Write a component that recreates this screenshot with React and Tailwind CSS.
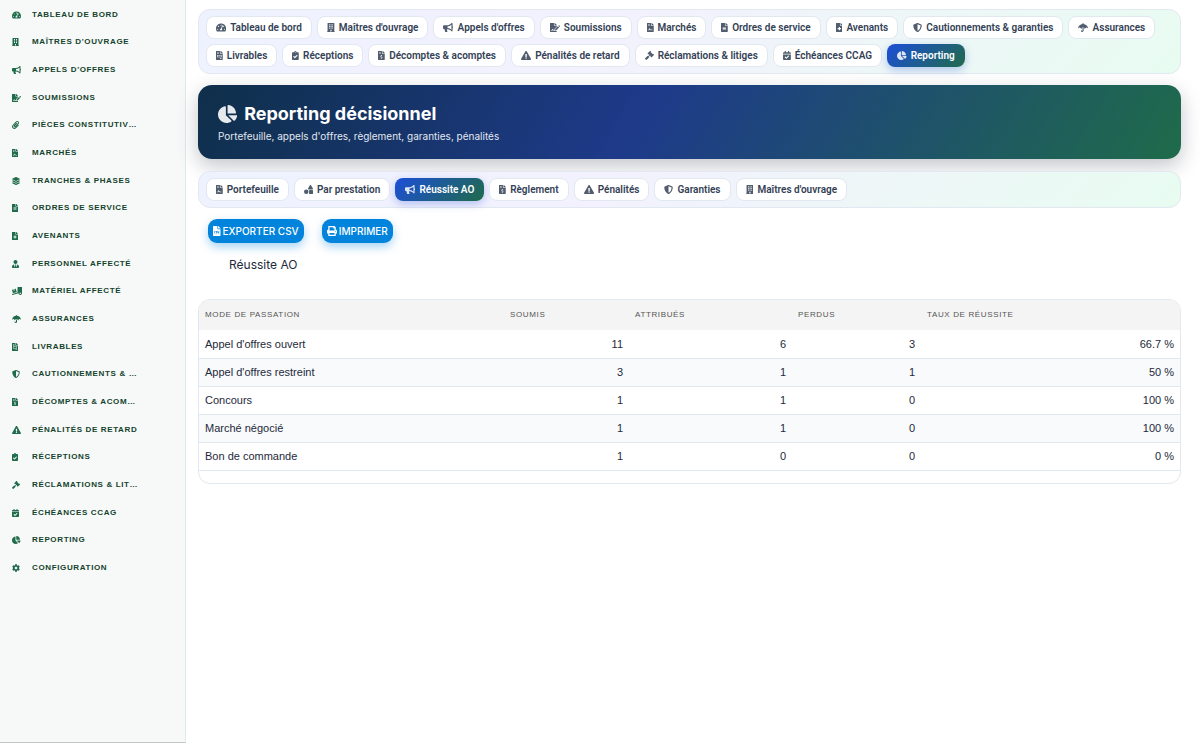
import {
  FaTachometerAlt, FaBuilding, FaBullhorn, FaFileSignature, FaPaperclip, FaFileContract, FaLayerGroup,
  FaFileAlt, FaFileMedical, FaUserTie, FaTruckLoading, FaUmbrella, FaFileInvoice, FaShieldAlt,
  FaFileInvoiceDollar, FaExclamationTriangle, FaClipboardCheck, FaGavel, FaCalendarCheck, FaChartPie,
  FaCog, FaShapes, FaFileCsv, FaPrint,
} from "react-icons/fa";

const sideItems = [
  ["Tableau de bord", FaTachometerAlt],
  ["Maîtres d'ouvrage", FaBuilding],
  ["Appels d'offres", FaBullhorn],
  ["Soumissions", FaFileSignature],
  ["Pièces constitutives", FaPaperclip],
  ["Marchés", FaFileContract],
  ["Tranches & phases", FaLayerGroup],
  ["Ordres de service", FaFileAlt],
  ["Avenants", FaFileMedical],
  ["Personnel affecté", FaUserTie],
  ["Matériel affecté", FaTruckLoading],
  ["Assurances", FaUmbrella],
  ["Livrables", FaFileInvoice],
  ["Cautionnements & garanties", FaShieldAlt],
  ["Décomptes & acomptes", FaFileInvoiceDollar],
  ["Pénalités de retard", FaExclamationTriangle],
  ["Réceptions", FaClipboardCheck],
  ["Réclamations & litiges", FaGavel],
  ["Échéances CCAG", FaCalendarCheck],
  ["Reporting", FaChartPie],
  ["Configuration", FaCog],
];

const moduleTabs = [
  ["Tableau de bord", FaTachometerAlt],
  ["Maîtres d'ouvrage", FaBuilding],
  ["Appels d'offres", FaBullhorn],
  ["Soumissions", FaFileSignature],
  ["Marchés", FaFileContract],
  ["Ordres de service", FaFileAlt],
  ["Avenants", FaFileMedical],
  ["Cautionnements & garanties", FaShieldAlt],
  ["Assurances", FaUmbrella],
  ["Livrables", FaFileInvoice],
  ["Réceptions", FaClipboardCheck],
  ["Décomptes & acomptes", FaFileInvoiceDollar],
  ["Pénalités de retard", FaExclamationTriangle],
  ["Réclamations & litiges", FaGavel],
  ["Échéances CCAG", FaCalendarCheck],
  ["Reporting", FaChartPie],
];

const reportTabs = [
  ["Portefeuille", FaFileContract],
  ["Par prestation", FaShapes],
  ["Réussite AO", FaBullhorn],
  ["Règlement", FaFileInvoiceDollar],
  ["Pénalités", FaExclamationTriangle],
  ["Garanties", FaShieldAlt],
  ["Maîtres d'ouvrage", FaBuilding],
];

const columns = ["Mode de passation", "Soumis", "Attribués", "Perdus", "Taux de réussite"];

const rows = [
  ["Appel d'offres ouvert", "11", "6", "3", "66.7 %"],
  ["Appel d'offres restreint", "3", "1", "1", "50 %"],
  ["Concours", "1", "1", "0", "100 %"],
  ["Marché négocié", "1", "1", "0", "100 %"],
  ["Bon de commande", "1", "0", "0", "0 %"],
];

function TabBar({ label, tabs, active }) {
  return (
    <nav
      aria-label={label}
      className="relative flex flex-wrap gap-[5px] rounded-xl border border-[#e2e8f0] bg-linear-[135deg] from-[#eef2ff] via-[#f3f1fe] via-40% to-[#e8fcf1] px-[7px] py-[6px] font-['Roboto',sans-serif]"
    >
      {tabs.map(([text, Icon]) => (
        <a
          key={text}
          href="#"
          aria-current={text === active ? "page" : undefined}
          className={
            text === active
              ? "flex h-[23px] items-center gap-1 rounded-lg border border-transparent bg-linear-[135deg] from-[#1d4ed8] to-[#1f6b4a] bg-origin-border px-[9px] text-[10px] font-semibold whitespace-nowrap text-white shadow-[0_3px_8px_rgba(29,78,216,0.3)]"
              : "flex h-[23px] items-center gap-1 rounded-lg border border-[#e2e8f0] bg-white px-[9px] text-[10px] font-semibold whitespace-nowrap text-[#334155]"
          }
        >
          <Icon size="auto" className="h-[9px] w-auto shrink-0 opacity-85" />
          {text}
        </a>
      ))}
    </nav>
  );
}

function ActionButton({ icon: Icon, children }) {
  return (
    <button
      type="button"
      className="flex h-6 items-center gap-[2px] rounded-[9px] bg-[#0284dc] px-[5px] text-[10px] font-medium text-white uppercase shadow-[0_4px_10px_rgba(2,132,220,0.35)]"
    >
      <Icon size="auto" className="h-[10px] w-auto" />
      {children}
    </button>
  );
}

export default function App() {
  return (
    <div className="flex min-h-screen bg-white font-['Inter',sans-serif] text-[#1e293b]">
      <aside className="w-[186px] shrink-0 border-r border-b border-r-[#e2e8f0] border-b-[#c4c6c5] bg-[#f7f9f8]">
        <nav aria-label="Menu principal" className="grid h-[582px] auto-rows-fr grid-cols-1 pt-px">
          {sideItems.map(([text, Icon]) => (
            <a
              key={text}
              href="#"
              className="flex min-w-0 items-center gap-[5px] pr-[46px] pl-3 font-['Liberation_Sans',Arial,sans-serif] text-[8px] font-bold tracking-[0.08em] text-[#14432d] uppercase"
            >
              <span className="flex w-[15px] shrink-0">
                <Icon size="auto" className="h-2 w-auto text-[#1f6b4a]" />
              </span>
              <span className="truncate">{text}</span>
            </a>
          ))}
        </nav>
      </aside>

      <main className="min-w-0 flex-1 pt-[9px] pr-[19px] pl-3">
        <TabBar label="Modules" tabs={moduleTabs} active="Reporting" />

        <header className="mt-[11px] mb-3 rounded-[14px] bg-linear-[120deg] from-[#0f2f4a] via-[#1e3a8a] via-45% to-[#1f6b4a] px-5 pt-[17px] pb-[15px] text-white shadow-[0_7px_20px_rgba(15,23,42,0.25)]">
          <h1 className="flex items-center gap-[7px] text-lg leading-6 font-bold">
            <FaChartPie size="auto" className="h-[18px] w-auto opacity-90" />
            Reporting décisionnel
          </h1>
          <p className="mt-[2px] text-[10px] leading-4 text-[#e2e8f0]">Portefeuille, appels d'offres, règlement, garanties, pénalités</p>
        </header>

        <TabBar label="Rapports" tabs={reportTabs} active="Réussite AO" />

        <div className="mt-[11px] ml-[10px] flex gap-[18px]">
          <ActionButton icon={FaFileCsv}>Exporter CSV</ActionButton>
          <ActionButton icon={FaPrint}>Imprimer</ActionButton>
        </div>

        <h2 className="mt-3 ml-[31px] text-xs leading-5">Réussite AO</h2>

        <section className="mt-6 overflow-hidden rounded-xl border border-[#e2e8f0] pb-3">
          <table className="w-full table-fixed border-collapse font-['Liberation_Sans',Arial,sans-serif]">
            <colgroup>
              <col className="w-[305px]" />
              <col className="w-[125px]" />
              <col className="w-[163px]" />
              <col className="w-[129px]" />
              <col className="w-[259px]" />
            </colgroup>
            <thead>
              <tr className="h-[30px] bg-[#f4f4f4]">
                {columns.map((c) => (
                  <th key={c} scope="col" className="px-[6px] text-left text-[8px] font-normal tracking-[0.08em] text-[#555555] uppercase">
                    {c}
                  </th>
                ))}
              </tr>
            </thead>
            <tbody>
              {rows.map((r) => (
                <tr key={r[0]} className="h-7 border-b border-[#e2e8f0] text-[11px] even:bg-[#f8fafc]">
                  {r.map((v, i) => (
                    <td key={i} className={i === 0 ? "px-[6px] text-left" : "px-[6px] text-right"}>
                      {v}
                    </td>
                  ))}
                </tr>
              ))}
            </tbody>
          </table>
        </section>
      </main>
    </div>
  );
}
